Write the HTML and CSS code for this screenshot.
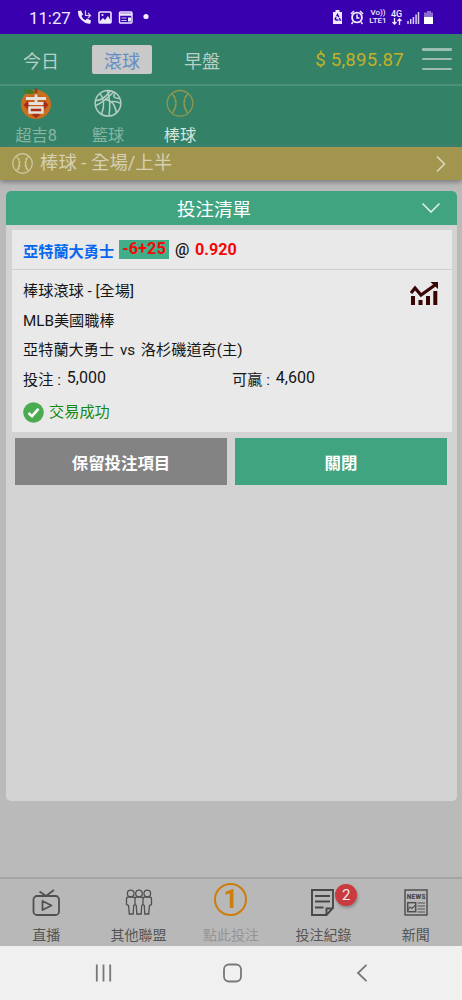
FILE: index.html
```html
<!DOCTYPE html>
<html lang="zh-Hant">
<head>
<meta charset="utf-8">
<meta name="viewport" content="width=device-width">
<title>投注清單</title>
<link rel="stylesheet" href="styles.css">
</head>
<body>
<div class="phone">
  <div class="status">
    <span class="clock">11:27</span>
    <svg class="status-left" width="74" height="16" viewBox="0 0 74 16">
      <path d="M1 2l3-.5 2 4-1.600 1.500q1.400 3 4 4.200l1.600-1.700 4 2-.6 3Q9 15.500 4.500 11 .5 7 1 2z" fill="#f0eaff"/>
      <path d="M8.500 1.500v5h5M11 4l2.500 2.500L11 9" fill="none" stroke="#d8ccf5" stroke-width="1.200"/>
      <rect x="22" y="3" width="12" height="11" rx="1" fill="none" stroke="#f0eaff" stroke-width="1.600"/>
      <path d="M23 12l3-3 2 2 3-4 3 5v2H23z" fill="#f0eaff"/><circle cx="25.500" cy="6" r="1.100" fill="#f0eaff"/>
      <rect x="42.500" y="3" width="12.500" height="11" rx="1" fill="none" stroke="#f0eaff" stroke-width="1.400"/>
      <path d="M42.500 5.500H55" stroke="#f0eaff" stroke-width="2.500"/><path d="M44.500 9h5M44.500 11.500h5" stroke="#d0c5ef"/><path d="M51 8.500h3v4h-3z" fill="#f0eaff"/>
      <circle cx="69" cy="7.500" r="2.600" fill="#f0eaff"/>
    </svg>
    <div class="status-right">
      <svg width="34" height="16" viewBox="0 0 34 16">
        <path d="M3.500 1h4v2H10v12H1V3h2.500z" fill="#f0eaff"/><path d="M5.500 5.500L8.300 11H2.700z" fill="none" stroke="#3900b0" stroke-width="1.400" stroke-dasharray="3 1"/>
        <circle cx="25" cy="8.500" r="4.900" fill="none" stroke="#f0eaff" stroke-width="1.900"/><path d="M25 5.500V9h2.500M19 5l3-3M31 5l-3-3M21 13l-1.500 2M29 13l1.500 2" fill="none" stroke="#f0eaff" stroke-width="1.500"/>
      </svg>
      <span class="net"><i>Vo))</i><i>LTE1</i></span>
      <span class="net gen"><i>4G</i><svg width="10" height="7" viewBox="0 0 10 7"><path d="M2.500 0v6M.5 4l2 2 2-2M7.500 7V1M5.500 3l2-2 2 2" fill="none" stroke="#f0eaff" stroke-width="1.300"/></svg></span>
      <svg class="signal" width="27" height="15" viewBox="0 0 27 15">
        <path d="M1 14v-3M3.700 14v-5M6.400 14V7M9.100 14V4.500M11.500 14V2" stroke="#d8cdf5" stroke-width="1.500"/>
        <path d="M20 1h4v1.500h2V7h-9V2.500h3z" fill="#8c6bd2"/><path d="M17 7h9v7h-9z" fill="#fff"/>
      </svg>
    </div>
  </div>

  <header class="topbar">
    <span class="tab">今日</span><span class="tab active">滾球</span><span class="tab last">早盤</span>
    <span class="balance">$ 5,895.87</span>
    <span class="menu"><b></b><b></b><b></b></span>
  </header>

  <nav class="sports">
    <div class="sport">
      <svg width="30" height="31" viewBox="0 0 30 31"><ellipse cx="15" cy="16.500" rx="15" ry="14.500" fill="#c8701f"/><ellipse cx="15" cy="17" rx="11" ry="10.500" fill="#c65f1e"/><path d="M14 5q-3-5-12-3 3 6 12 3z" fill="#3f7a25"/><path d="M13.500 5l.5-5 2.500.5V5z" fill="#8d451b"/><path d="M2.500 17l4-4 3 3-3 5zM27.500 17l-4-4-3 3 3 5zM11 27l4-3 4 3-4 3z" fill="#a82c16"/><path d="M15 6.500v9M5 10.500h20M7.500 15.500h15" stroke="#e6e1da" stroke-width="2.800"/><path d="M8.500 19.500h13v5h-13z" fill="#aa2d16" stroke="#e6e1da" stroke-width="2.500"/></svg>
      <span>超吉8</span>
    </div>
    <div class="sport">
      <svg width="30" height="31" viewBox="0 0 30 31" fill="none" stroke="#b4cec3" stroke-width="1.500"><circle cx="15" cy="15.300" r="12.800"/><path d="M7 5.500Q13.500 13 8.500 26.500M14.500 2.500Q18 14 16 28M2.800 12.500Q10 13 17.500 2.800M20.500 4Q11 14 2.800 17.500M22.500 5Q17.500 10 26.500 10.500M12 11.500Q21 12 23.500 24.500M19 13.500Q24 13 27.500 15.500"/></svg>
      <span>籃球</span>
    </div>
    <div class="sport selected">
      <svg width="30" height="31" viewBox="0 0 30 31" fill="none" stroke="#91984d" stroke-width="1.300"><circle cx="15" cy="15.300" r="12.800"/><path d="M7 5.300q8 10 0 20M23 5.300q-8 10 0 20"/><path d="M8 9h3M9 13h3M9 17h3M8 21h3M22 9h-3M21 13h-3M21 17h-3M22 21h-3" stroke-width=".6"/></svg>
      <span>棒球</span>
    </div>
  </nav>

  <div class="market">
    <svg width="22" height="22" viewBox="0 0 22 22" fill="none" stroke="#d1cba7" stroke-width="1.200"><circle cx="10.500" cy="10.500" r="9.800"/><path d="M4.500 3q6 7.500 0 15M16.500 3q-6 7.500 0 15"/><path d="M6 6h2M7 9h2M7 13h2M6 16h2M15 6h-2M14 9h-2M14 13h-2M15 16h-2" stroke-width=".6"/></svg>
    <span>棒球 - 全場/上半</span>
    <svg class="next" width="12" height="18" viewBox="0 0 12 18"><path d="M2 1.500l7.500 7.500L2 16.500" fill="none" stroke="#dcd8c2" stroke-width="1.600"/></svg>
  </div>

  <main class="page">
    <section class="slip">
      <h1 class="slip-title"><span>投注清單</span><svg width="20" height="12" viewBox="0 0 20 12"><path d="M1.500 1.500l8.500 8.500 8.500-8.500" fill="none" stroke="#d9eee6" stroke-width="1.700"/></svg></h1>
      <article class="bet">
        <div class="pick"><span class="team">亞特蘭大勇士</span><span class="line">-6+25</span><span class="at">@</span><span class="odds">0.920</span></div>
        <div class="details">
          <svg class="chart" width="28" height="24" viewBox="0 0 28 24"><path d="M1 14h4v9H1zM8.500 18h4v5h-4zM16 14h4v9h-4zM23.300 9h4v14h-4z" fill="#3a0505"/><path d="M1 11l4-5 6 7L25 3" fill="none" stroke="#3a0505" stroke-width="3.200"/><path d="M20.500 0H28v7z" fill="#3a0505"/></svg>
          <p>棒球滾球 - [全場]</p>
          <p class="league">MLB美國職棒</p>
          <p class="match">亞特蘭大勇士 vs 洛杉磯道奇(主)</p>
          <div class="amounts"><p>投注 : <b>5,000</b></p><p>可贏 : <b>4,600</b></p></div>
          <p class="success"><svg width="21" height="21" viewBox="0 0 21 21"><circle cx="10.500" cy="10.500" r="10.300" fill="#4aab50"/><path d="M5.500 11l3.500 3.200 6.500-7.400" fill="none" stroke="#fff" stroke-width="2.600"/></svg><span>交易成功</span></p>
        </div>
      </article>
      <div class="actions"><button class="keep">保留投注項目</button><button class="close">關閉</button></div>
    </section>
  </main>

  <nav class="bottom">
    <div class="item"><svg width="34" height="36" viewBox="0 0 34 36" fill="none" stroke="#505050" stroke-width="1.800"><rect x="4.500" y="13" width="25.500" height="19" rx="3.500"/><path d="M10.500 8.500l6.500 4.500 8-6"/><path d="M13.500 18v9l9-4.500z" stroke-linejoin="round"/></svg><span>直播</span></div>
    <div class="item"><svg width="34" height="36" viewBox="0 0 34 36" fill="none" stroke="#505050" stroke-width="1.300"><circle cx="8.700" cy="10.500" r="3.300"/><circle cx="17" cy="10.500" r="3.300"/><circle cx="25.300" cy="10.500" r="3.300"/><path d="M6.500 14H11q2 0 2 2v5.500l-1.300 1-.5 8.500H7.300l-.8-8.500-2-1V16q0-2 2-2zM15 14h4q2 0 2 2v5.500l-1.300 1-.5 8.500h-4.400l-.5-8.500-1.300-1V16q0-2 2-2zM23 14h4.500q2 0 2 2v5.500l-2 1-.8 8.500h-3.900l-.5-8.500-1.300-1V16q0-2 2-2z"/></svg><span>其他聯盟</span></div>
    <div class="item muted"><span class="coin">1</span><span>點此投注</span></div>
    <div class="item"><svg width="34" height="36" viewBox="0 0 34 36" fill="none" stroke="#484848" stroke-width="1.900"><path d="M6 7h21v18L20.500 32H6zM27 25.500h-6.500V32M9 13H24M9 18.500H24M9 24.500h8.500"/></svg><em class="count">2</em><span>投注紀錄</span></div>
    <div class="item"><svg width="34" height="36" viewBox="0 0 34 36" fill="none" stroke="#505050" stroke-width="1.500"><rect x="6" y="7" width="22" height="25"/><rect x="8.700" y="19.700" width="8" height="9"/><path d="M9 27l2-3 2 1.500 3-3M18.500 20H26M18.500 23H26M18.500 26H26M18.500 29H26" stroke-width="1.100"/><text x="17.200" y="16" text-anchor="middle" class="news">NEWS</text></svg><span>新聞</span></div>
  </nav>

  <div class="system">
    <svg width="20" height="20" viewBox="0 0 20 20" fill="none" stroke="#777" stroke-width="1.800"><path d="M2.800 1.500v17M9.500 1.500v17M16.200 1.500v17"/></svg>
    <svg width="20" height="20" viewBox="0 0 20 20" fill="none" stroke="#777" stroke-width="1.800"><rect x="1" y="1.500" width="17" height="17" rx="5"/></svg>
    <svg width="20" height="20" viewBox="0 0 20 20" fill="none" stroke="#777" stroke-width="1.800"><path d="M14.500 1.800L6 10l8.500 8.200"/></svg>
  </div>
</div>
</body>
</html>
```
FILE: styles.css
```css
* { box-sizing: border-box; }
body { margin: 0; font-family: Roboto, "Noto Sans CJK TC", sans-serif; background: #bbb; }
p, h1 { margin: 0; font-weight: 400; }
svg { display: block; flex: none; }
.phone { width: 462px; height: 1000px; display: flex; flex-direction: column; overflow: hidden; }
.phone > * { flex: none; }

.status { height: 34px; background: #3900b0; color: #f0eaff; display: flex; align-items: center; padding: 0 28px 0 29px; }
.clock { width: 48px; font-size: 16.800px; line-height: 32px; padding-top: 2px; }
.status-left { width: 74px; }
.status-right { margin-left: auto; display: flex; align-items: center; }
.net { display: flex; flex-direction: column; align-items: center; width: 18px; margin-left: 3px; }
.net i { font: 500 8px/8px Roboto, sans-serif; }
.gen { width: 11px; margin-left: 4px; }
.gen i { font-size: 9px; }
.signal { margin-left: 5px; }

.topbar { height: 52px; background: #338267; border-bottom: 2px solid #4e917b; display: flex; align-items: center; padding: 0 10px 0 23px; color: #b9cfc7; }
.tab { font-size: 18px; line-height: 26px; width: 36px; padding-top: 5px; }
.tab.active { width: 60px; height: 29px; padding-top: 4px; margin-left: 33px; margin-right: 32px; background: #c9c9c9; color: #628fc5; border-radius: 2px; text-align: center; }
.balance { margin-left: auto; color: #c2b027; font-size: 18.600px; letter-spacing: .25px; line-height: 24px; padding-top: 1px; }
.menu { width: 30px; height: 22px; margin-left: 18px; display: flex; flex-direction: column; justify-content: space-between; }
.menu b { height: 2.500px; border-radius: 1px; background: #9cbdb1; }

.sports { height: 61px; background: #338267; display: flex; }
.sport { width: 72px; padding-top: 2px; display: flex; flex-direction: column; align-items: center; color: #86b5a4; font-size: 16.300px; line-height: 22px; }
.sport span { margin-top: 6px; }
.selected { color: #d8e5df; }

.market { height: 33px; background: #a2964f; color: #d5d0b4; display: flex; align-items: center; padding: 0 15px 0 12px; font-size: 18.400px; line-height: 30px; position: relative; z-index: 1; box-shadow: 0 2px 5px #777; }
.market span { margin: -2px 0 0 6px; }
.next { margin-left: auto; }

.page { height: 697px; padding: 11px 5px 0 6px; background: #bababa; }
.slip { height: 610px; background: #d3d3d3; border-radius: 5px; overflow: hidden; }
.slip-title { height: 34px; background: #40a481; color: #fff; display: flex; align-items: center; padding: 0 16px 0 1px; font-size: 18.500px; line-height: 34px; }
.slip-title span { flex: 1; padding-top: 3px; text-align: center; }
.bet { margin: 5px 5px 0 6px; height: 202px; background: #e9e9e9; color: #161616; font-size: 15.200px; }
.pick { height: 40px; border-bottom: 1px solid #cfcfcf; display: flex; align-items: center; padding-left: 11px; font-weight: 700; }
.team { color: #0866ef; width: 96px; white-space: nowrap; }
.line { width: 50px; height: 19px; background: #42ae89; color: #f50707; text-align: center; font-size: 16.400px; line-height: 18px; }
.at { margin-left: 6px; width: 20px; font-size: 16px; font-weight: 500; line-height: 20px; }
.odds { color: #f50707; font-size: 16.200px; line-height: 20px; }
.details { padding: 7px 14px 0 11px; display: flow-root; }
.details p { line-height: 29px; height: 29.500px; white-space: nowrap; }
.match { word-spacing: 2px; }
.chart { float: right; margin-top: 5px; }
.amounts { display: grid; grid-template-columns: 209px 1fr; }
.amounts p { display: flex; gap: 6px; }
.amounts b { font-weight: 400; font-size: 16px; line-height: 23px; }
.details .success { display: flex; align-items: center; gap: 5px; height: 34px; color: #148a14; }

.actions { display: grid; grid-template-columns: 212px 212px; gap: 8px; padding: 6px 9px; }
.actions button { border: 0; height: 47px; padding: 0; color: #fff; font: 700 16.400px Roboto, "Noto Sans CJK TC", sans-serif; }
.keep { background: #838383; }
.close { background: #40a481; }

.bottom { height: 69px; border-top: 2px solid #a5a5a5; background: #b8b8b8; display: grid; grid-template-columns: repeat(5, 1fr); }
.item { position: relative; display: flex; flex-direction: column; align-items: center; justify-content: space-between; padding: 4px 0 0; color: #555; font-size: 14px; line-height: 21px; }
.muted { color: #949494; }
.coin { width: 33px; height: 33px; border: 2px solid #cd7d0b; border-radius: 50%; color: #cd7d0b; text-align: center; font: 700 25px/29px Roboto, sans-serif; }
.count { position: absolute; left: 58px; top: 5px; width: 22px; height: 22px; border-radius: 50%; background: #c93b3e; color: #eee; text-align: center; font: 400 15px/22px Roboto, sans-serif; box-shadow: 1px 2px 3px #888; }
.news { font: 900 6.500px Roboto, sans-serif; letter-spacing: .3px; fill: #484848; stroke: none; }
.system { height: 54px; background: #f0f0f0; display: flex; align-items: center; justify-content: space-between; padding: 0 90px 0 94px; }
```
